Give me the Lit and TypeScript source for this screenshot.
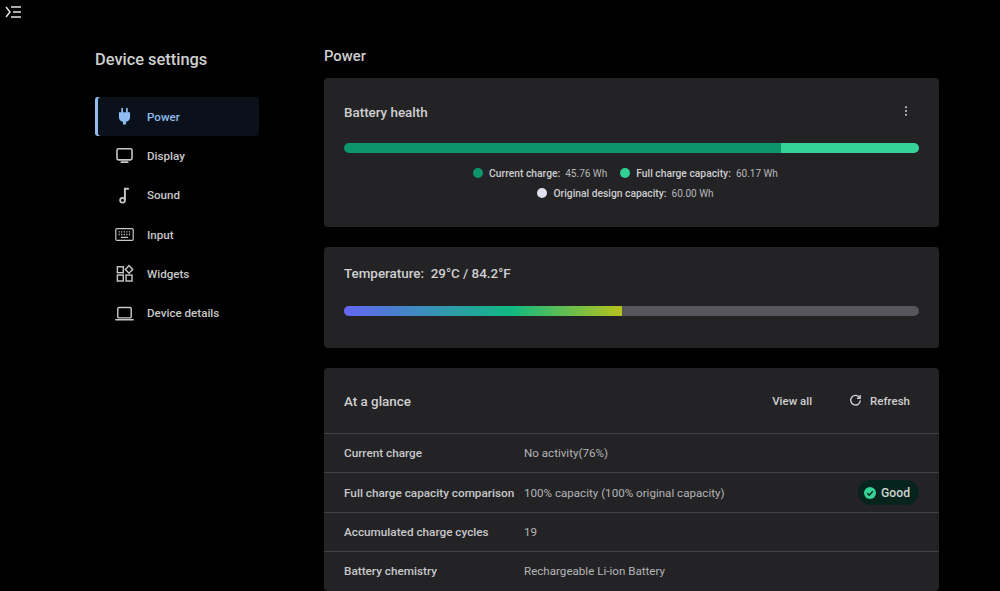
import { LitElement, html, css, svg } from 'lit';
import { customElement } from 'lit/decorators.js';

const icons = {
    power: svg`<path d="M9 2v5M15 2v5" stroke="currentColor" stroke-width="2.2" stroke-linecap="round"/><path d="M5 6.5h14v6.5a6 6 0 0 1-5 5.6V22h-4v-3.4a6 6 0 0 1-5-5.6z" fill="currentColor"/>`,
    display: svg`<rect x="2.5" y="3.5" width="19" height="14" rx="2" fill="none" stroke="currentColor" stroke-width="2"/><path d="M8 20.5h8" stroke="currentColor" stroke-width="2.2" stroke-linecap="round"/>`,
    sound: svg`<circle cx="9.5" cy="18" r="3" fill="none" stroke="currentColor" stroke-width="2.2"/><path d="M12.5 18V3.5h5" fill="none" stroke="currentColor" stroke-width="2.4"/>`,
    input: svg`<rect x="1" y="4.5" width="22" height="15" rx="1.5" fill="none" stroke="currentColor" stroke-width="1.5"/><path d="M4.5 8.7h1.5M7.7 8.7h1.5M11 8.7h1.5M14.2 8.7h1.5M17.5 8.7h1.5M4.5 12h1.5M7.7 12h1.5M11 12h1.5M14.2 12h1.5M17.5 12h1.5M7.5 15.7h9" stroke="currentColor" stroke-width="1.6"/>`,
    widgets: svg`<g fill="none" stroke="currentColor" stroke-width="1.8"><rect x="3" y="3.5" width="7.5" height="7.5"/><rect x="3" y="14" width="7.5" height="7.5"/><rect x="14" y="14" width="7.5" height="7.5"/><path d="M17.7 2l4.6 4.8-4.6 4.8-4.6-4.8z"/></g>`,
    details: svg`<rect x="3.5" y="4.5" width="17" height="13" rx="1.5" fill="none" stroke="currentColor" stroke-width="1.8"/><path d="M1 20h22" stroke="currentColor" stroke-width="1.9" stroke-linecap="round"/>`,
};

const navItems = [
    { label: 'Power', icon: icons.power, active: true },
    { label: 'Display', icon: icons.display },
    { label: 'Sound', icon: icons.sound },
    { label: 'Input', icon: icons.input },
    { label: 'Widgets', icon: icons.widgets },
    { label: 'Device details', icon: icons.details },
];

@customElement('app-root')
export class AppRoot extends LitElement {
    static styles = css`
    :host {
      display: block;
      position: relative;
      width: 1000px;
      height: 591px;
      overflow: hidden;
      background: #000;
      color: #d6d6d8;
      font-family: Roboto, "Open Sans", sans-serif;
      font-size: 12px;
    }
    .menu {
      position: absolute;
      left: 5px;
      top: 5px;
      width: 16px;
      height: 14px;
      color: #e4e4e4;
    }
    .layout {
      display: flex;
      padding: 0 61px 0 95px;
      gap: 65px;
    }
    .sidebar {
      width: 164px;
      flex: none;
      padding-top: 48px;
    }
    .sidebar h1 {
      margin: 0 0 26px;
      font-size: 16.4px;
      line-height: 23px;
      font-weight: 500;
      color: #cfcfcf;
    }
    .nav-item {
      display: flex;
      align-items: center;
      height: 39.3px;
      padding-left: 20px;
      gap: 13px;
      font-weight: 500;
      color: #c8c8c8;
      font-size: 11.6px;
    }
    .nav-item svg {
      width: 19px;
      height: 19px;
      flex: none;
    }
    .nav-item.active {
      color: #8fbdf2;
      background: #0b111a;
      border-radius: 3px;
      box-shadow: inset 3px 0 0 #8fbdf2;
    }
    .main {
      flex: 1;
      min-width: 0;
      padding-top: 45px;
    }
    .main h2 {
      margin: 0 0 11px;
      font-size: 14.8px;
      line-height: 22px;
      font-weight: 500;
      color: #cfcfcf;
    }
    .card {
      background: #232326;
      border-radius: 4px;
      margin-bottom: 20px;
    }
    .card-title {
      font-size: 13.4px;
      font-weight: 500;
      color: #cfcfd0;
    }
    .battery {
      height: 149px;
      padding: 0 20px;
      box-sizing: border-box;
    }
    .battery-head {
      display: flex;
      justify-content: space-between;
      align-items: center;
      height: 65px;
    }
    .battery-head .card-title { margin-top: 3px; }
    .dots {
      width: 4px;
      height: 10px;
      margin: 1px 11px 0 0;
      color: #d0d0d0;
    }
    .bar {
      display: flex;
      height: 10px;
      border-radius: 5px;
      overflow: hidden;
    }
    .charge { width: 76%; background: #0d966c; }
    .full { flex: 1; background: #36d399; }
    .legend {
      margin-top: 10px;
      padding-right: 12px;
      font-size: 10.3px;
    }
    .legend-row {
      display: flex;
      justify-content: center;
      gap: 13px;
      height: 20px;
      align-items: center;
    }
    .legend-item {
      display: flex;
      align-items: center;
      gap: 5px;
    }
    .legend-item b { font-weight: 500; color: #cdcdcf; margin-left: 1px; }
    .legend-item span { color: #b8b8ba; font-size: 10px; }
    .dot {
      width: 10px;
      height: 10px;
      border-radius: 50%;
    }
    .temperature {
      height: 101px;
      padding: 17px 20px 0;
      box-sizing: border-box;
    }
    .temperature .card-title { line-height: 20px; }
    .temp-bar {
      margin-top: 22px;
      height: 10px;
      border-radius: 5px;
      overflow: hidden;
      background: #55555c;
    }
    .temp-fill {
      width: 48.3%;
      height: 100%;
      background: linear-gradient(90deg, #6366f1 0%, #10b981 60%, #b8c21e 100%);
    }
    .glance { margin-bottom: 0; }
    .glance-head {
      display: flex;
      align-items: center;
      height: 65px;
      padding: 0 29px 0 20px;
    }
    .glance-head .card-title { flex: 1; margin-top: 2px; }
    .action {
      font-weight: 500;
      font-size: 11.5px;
      color: #cfcfd0;
      display: flex;
      align-items: center;
      gap: 8px;
    }
    .view-all { margin-right: 37px; }
    .action svg { width: 13px; height: 13px; }
    .row {
      display: flex;
      align-items: center;
      height: 39.4px;
      border-top: 1px solid #414144;
      box-sizing: border-box;
      padding: 0 20px;
    }
    .row .name {
      width: 180px;
      flex: none;
      font-weight: 500;
      font-size: 11.75px;
      white-space: nowrap;
      color: #c8c8ca;
    }
    .row .value {
      flex: 1;
      font-size: 11.6px;
      color: #b4b4b6;
    }
    .good {
      display: flex;
      align-items: center;
      gap: 5px;
      height: 25px;
      padding: 0 9px 0 6px;
      border-radius: 13px;
      background: #06231c;
      font-weight: 500;
      font-size: 12.2px;
      color: #cfd4d2;
    }
    .good svg { width: 12px; height: 12px; }
  `;

    render() {
        return html`
      <svg class="menu" viewBox="0 0 16 14" fill="none" stroke="currentColor" stroke-width="1.5">
        <path d="M1 2l4 5-4 5M6 2h10M8 7h8M6 12h10"/>
      </svg>
      <div class="layout">
        <aside class="sidebar">
          <h1>Device settings</h1>
          ${navItems.map(item => html`
            <div class="nav-item ${item.active ? 'active' : ''}">
              <svg viewBox="0 0 24 24">${item.icon}</svg>
              <span>${item.label}</span>
            </div>
          `)}
        </aside>
        <main class="main">
          <h2>Power</h2>
          <section class="card battery">
            <div class="battery-head">
              <span class="card-title">Battery health</span>
              <svg class="dots" viewBox="0 0 4 10" fill="currentColor">
                <circle cx="2" cy="1.2" r="1"/><circle cx="2" cy="5" r="1"/><circle cx="2" cy="8.8" r="1"/>
              </svg>
            </div>
            <div class="bar"><div class="charge"></div><div class="full"></div></div>
            <div class="legend">
              <div class="legend-row">
                ${this.legendItem('#0d966c', 'Current charge:', '45.76 Wh')}
                ${this.legendItem('#2fcf95', 'Full charge capacity:', '60.17 Wh')}
              </div>
              <div class="legend-row">
                ${this.legendItem('#dfe1ee', 'Original design capacity:', '60.00 Wh')}
              </div>
            </div>
          </section>
          <section class="card temperature">
            <div class="card-title">Temperature:&nbsp; 29°C / 84.2°F</div>
            <div class="temp-bar"><div class="temp-fill"></div></div>
          </section>
          <section class="card glance">
            <div class="glance-head">
              <span class="card-title">At a glance</span>
              <span class="action view-all">View all</span>
              <span class="action">
                <svg viewBox="0 0 14 14" fill="none" stroke="currentColor" stroke-width="1.5">
                  <path d="M11.6 4.2A5.2 5.2 0 1 0 12.2 7"/>
                  <path d="M12 1.2v3.4H8.6"/>
                </svg>
                Refresh
              </span>
            </div>
            <div class="row"><span class="name">Current charge</span><span class="value">No activity(76%)</span></div>
            <div class="row">
              <span class="name">Full charge capacity comparison</span>
              <span class="value">100% capacity (100% original capacity)</span>
              <span class="good">
                <svg viewBox="0 0 12 12">
                  <circle cx="6" cy="6" r="6" fill="#36d399"/>
                  <path d="M3.2 6.2l2 2 3.6-4" fill="none" stroke="#06231c" stroke-width="1.4"/>
                </svg>
                Good
              </span>
            </div>
            <div class="row"><span class="name">Accumulated charge cycles</span><span class="value">19</span></div>
            <div class="row"><span class="name">Battery chemistry</span><span class="value">Rechargeable Li-ion Battery</span></div>
          </section>
        </main>
      </div>
    `;
    }

    legendItem(color: string, label: string, value: string) {
        return html`
      <div class="legend-item">
        <i class="dot" style="background:${color}"></i>
        <b>${label}</b><span>${value}</span>
      </div>
    `;
    }
}
